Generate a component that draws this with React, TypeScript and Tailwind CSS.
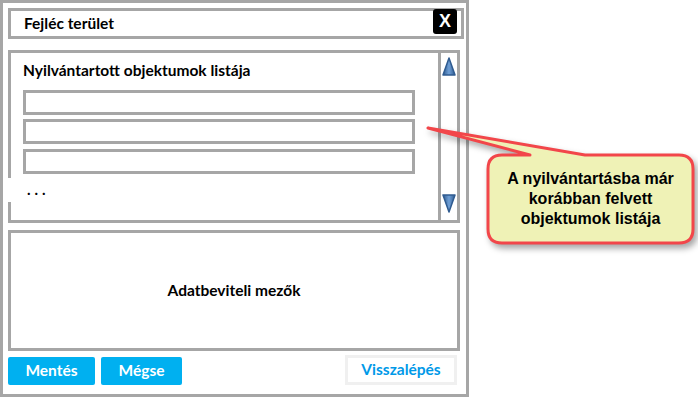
import React from "react";

const ui = { fontFamily: "Lato, 'Open Sans', sans-serif" };

function UpArrow() {
  return (
    <svg width="16" height="19" viewBox="0 0 16 19">
      <defs>
        <linearGradient id="ga" x1="0" x2="1" y1="0" y2="0">
          <stop offset="0" stopColor="#2f5b90" />
          <stop offset="0.5" stopColor="#6f9fd6" />
          <stop offset="1" stopColor="#2f5b90" />
        </linearGradient>
      </defs>
      <path d="M8 1 L14 18 L2 18 Z" fill="url(#ga)" stroke="#2f5b90" strokeWidth="1.5" strokeLinejoin="round" />
    </svg>
  );
}

function DownArrow() {
  return (
    <svg width="16" height="19" viewBox="0 0 16 19">
      <defs>
        <linearGradient id="gb" x1="0" x2="1" y1="0" y2="0">
          <stop offset="0" stopColor="#2f5b90" />
          <stop offset="0.5" stopColor="#6f9fd6" />
          <stop offset="1" stopColor="#2f5b90" />
        </linearGradient>
      </defs>
      <path d="M2 1 L14 1 L8 18 Z" fill="url(#gb)" stroke="#2f5b90" strokeWidth="1.5" strokeLinejoin="round" />
    </svg>
  );
}

export default function App() {
  return (
    <div className="relative w-[698px] h-[399px] bg-white overflow-hidden" style={ui}>
      <div className="w-[469px] h-[397px] border-[3px] border-[#a6a6a6] pl-[5px] pt-[5px] flex flex-col">
        {/* header */}
        <div className="w-[456px] h-[31px] border-[3px] border-[#a6a6a6] flex items-center pl-[13px] pr-[4px]">
          <span className="text-[15.5px] font-bold text-black leading-none">Fejléc terület</span>
          <div className="ml-auto -mt-[4px] w-[24px] h-[25px] rounded-[3px] bg-black text-white flex items-center justify-center text-[18px] font-bold" style={{ fontFamily: "'Liberation Sans', Arial, sans-serif" }}>
            X
          </div>
        </div>

        {/* list */}
        <div className="relative mt-[11px] w-[452px] h-[173px] border-[3px] border-[#a6a6a6] flex">
          <div className="absolute -left-[3px] top-[125px] w-[3px] h-[24px] bg-white" />
          <div className="w-[427px] pl-[12px] pt-[7px] flex flex-col">
            <div className="text-[15.5px] font-bold leading-[20px] text-black">Nyilvántartott objektumok listája</div>
            <div className="mt-[10px] w-[392px] h-[25px] border-[3px] border-[#a6a6a6]" />
            <div className="mt-[4px] w-[392px] h-[25px] border-[3px] border-[#a6a6a6]" />
            <div className="mt-[5px] w-[392px] h-[25px] border-[3px] border-[#a6a6a6]" />
            <div className="mt-[5px] pl-[4px] text-[15px] leading-[20px] font-bold tracking-[4px] text-black">...</div>
          </div>
          <div className="w-[19px] border-l-[3px] border-[#a6a6a6] flex flex-col items-center justify-between pt-[4px] pb-[7px]">
            <UpArrow />
            <DownArrow />
          </div>
        </div>

        {/* form */}
        <div className="mt-[7px] w-[452px] h-[121px] border-[3px] border-[#a6a6a6] flex items-center justify-center">
          <span className="text-[15.5px] font-bold text-black">Adatbeviteli mezők</span>
        </div>

        {/* buttons */}
        <div className="mt-[6px] w-[453px] flex items-start">
          <div className="w-[87px] h-[28px] rounded-[2px] bg-[#00b0f0] text-white text-[15.5px] font-bold flex items-center justify-center">Mentés</div>
          <div className="ml-[6px] w-[81px] h-[28px] rounded-[2px] bg-[#00b0f0] text-white text-[15.5px] font-bold flex items-center justify-center">Mégse</div>
          <div className="ml-auto mr-[4px] -mt-[2px] w-[112px] h-[30px] border-[3px] border-[#f0f0f0] bg-white text-[#0099e8] text-[15.5px] font-bold flex items-center justify-center">Visszalépés</div>
        </div>
      </div>

      {/* callout */}
      <svg className="absolute left-0 top-0 drop-shadow-[3px_4px_3px_rgba(0,0,0,0.35)]" width="698" height="399" viewBox="0 0 698 399">
        <path
          d="M502 155 L530 155 L428 128 L585 155 L679 155 Q693 155 693 169 L693 229 Q693 243 679 243 L502 243 Q488 243 488 229 L488 169 Q488 155 502 155 Z"
          fill="#eff2b6"
          stroke="#f2464a"
          strokeWidth="3"
          strokeLinejoin="round"
        />
      </svg>
      <div
        className="absolute left-[488px] top-[169px] w-[205px] text-center text-[16px] font-bold leading-[20px] text-black"
        style={{ fontFamily: "'Liberation Sans', Arial, sans-serif" }}
      >
        A nyilvántartásba már<br />korábban felvett<br />objektumok listája
      </div>
    </div>
  );
}
